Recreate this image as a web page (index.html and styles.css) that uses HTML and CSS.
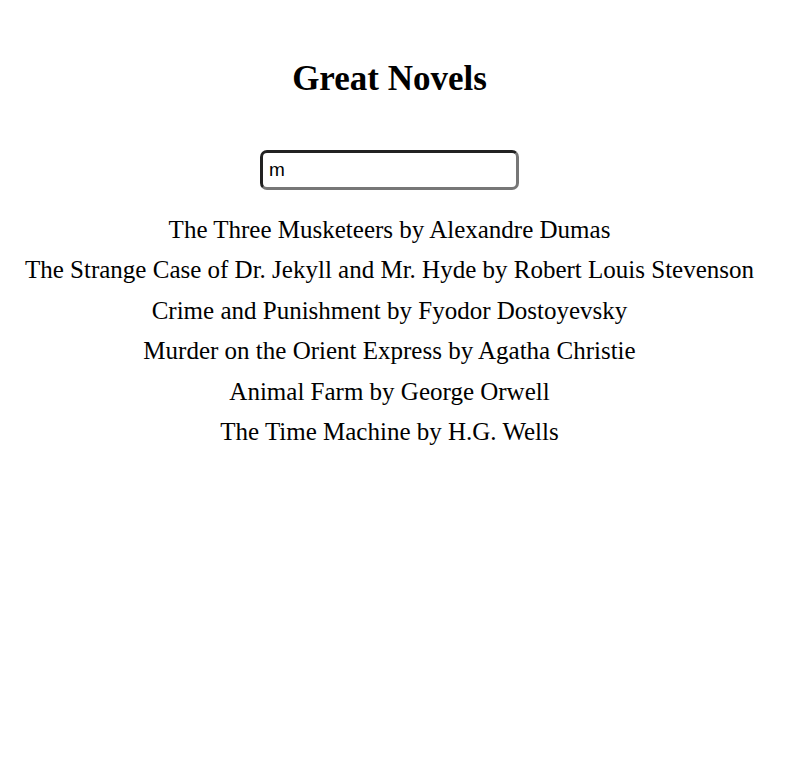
FILE: index.html
```html
<!DOCTYPE html>
<html>
<head>
<meta charset="utf-8">
<link rel="stylesheet" href="styles.css">
</head>
<body>
<div class="page">
  <h1 class="title">Great Novels</h1>
  <div class="search-row">
    <input class="search" type="text" value="m">
  </div>
  <ul class="list">
    <li>The Three Musketeers by Alexandre Dumas</li>
    <li>The Strange Case of Dr. Jekyll and Mr. Hyde by Robert Louis Stevenson</li>
    <li>Crime and Punishment by Fyodor Dostoyevsky</li>
    <li>Murder on the Orient Express by Agatha Christie</li>
    <li>Animal Farm by George Orwell</li>
    <li>The Time Machine by H.G. Wells</li>
  </ul>
</div>
</body>
</html>
```
FILE: styles.css
```css
html, body {
  margin: 0;
  padding: 0;
  background: #fff;
}
.page {
  width: 779px;
  font-family: "Liberation Serif", "Times New Roman", serif;
  color: #000;
  text-align: center;
  padding-top: 1px;
}
.title {
  font-size: 35px;
  font-weight: bold;
  margin: 58px 0 0;
  line-height: 40px;
}
.search-row {
  margin-top: 51px;
  display: flex;
  justify-content: center;
}
.search {
  box-sizing: border-box;
  width: 259px;
  height: 40px;
  border: 3px solid;
  border-color: #222 #777 #777 #222;
  border-radius: 7px;
  padding: 0 6px;
  font-family: "Liberation Sans", Arial, sans-serif;
  font-size: 19px;
  color: #000;
  outline: none;
}
.list {
  list-style: none;
  margin: 20px 0 0;
  padding: 0;
  font-size: 25px;
  line-height: 40.4px;
}
```
